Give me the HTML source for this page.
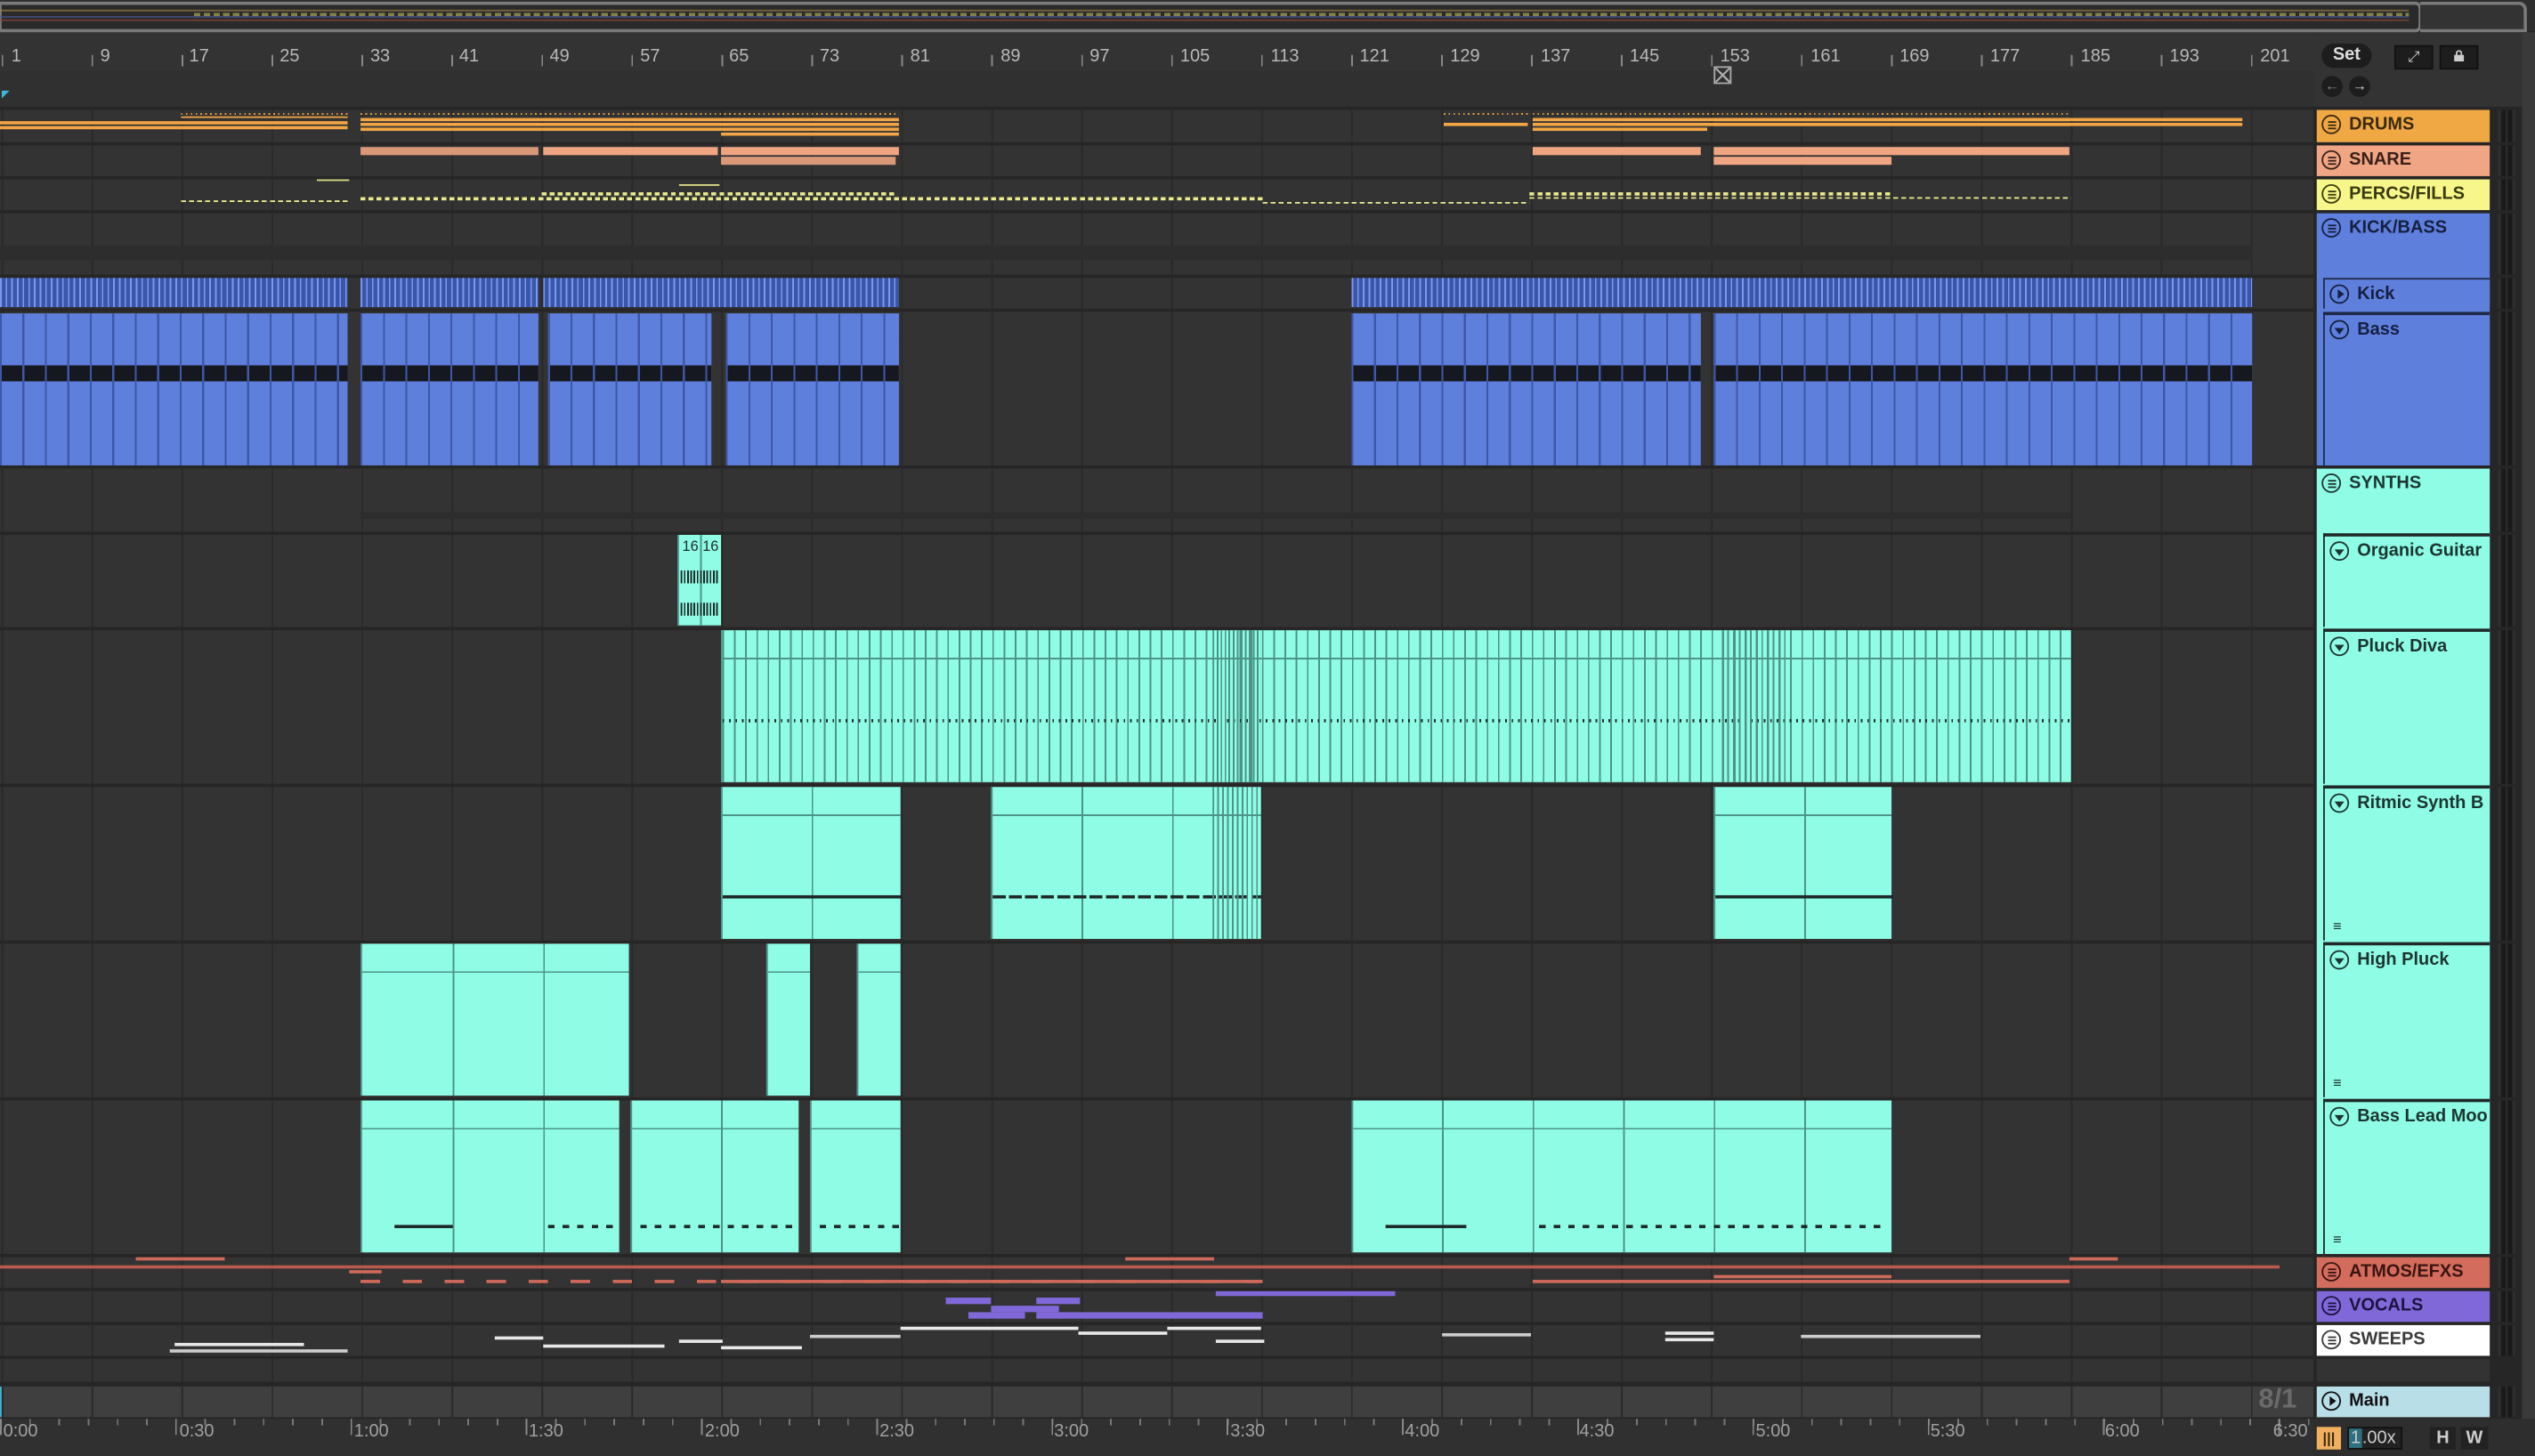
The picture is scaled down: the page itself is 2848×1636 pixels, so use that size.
<!DOCTYPE html>
<html><head><meta charset="utf-8">
<style>
html,body{margin:0;padding:0;background:#2b2b2b;width:2848px;height:1636px;overflow:hidden}
#w{position:absolute;left:0;top:0;width:1568px;height:901px;transform:scale(1.81633,1.81576);transform-origin:0 0;background:#262626;font-family:"Liberation Sans",sans-serif}
.a{position:absolute}
.row{position:absolute;left:0;width:1431px;background-color:#333;background-image:repeating-linear-gradient(90deg,#292929 0 1px,transparent 1px 55.65px);background-position:1px 0}
.h{position:absolute;left:1433px;width:107px;font-weight:bold;font-size:11px;color:#1e2a35;box-sizing:border-box;padding-left:20px;line-height:19px;white-space:nowrap;overflow:hidden}
.ic{position:absolute;left:3px;top:3px;width:12px;height:12px;border:1.2px solid currentColor;border-radius:50%;box-sizing:border-box}
.ic i{position:absolute;left:2.5px;width:5px;height:1px;background:currentColor}
.m{position:absolute;left:1545px;width:11px;background:#1a1a1a;border-left:2px solid #2e2e2e;border-right:2px solid #2e2e2e;box-sizing:border-box}
.m:after{content:"";position:absolute;left:3px;top:0;bottom:0;width:1px;background:#2e2e2e}
.cy{position:absolute;background-color:#8ffde6;border-left:1px solid #4d9488;box-sizing:border-box}
.bl{position:absolute;background:#5f7fdd;background-image:repeating-linear-gradient(90deg,#3d58a8 0 1.2px,transparent 1.2px 13.9px),linear-gradient(#5f7fdd 0 32px,#16181f 32px 42px,transparent 42px),linear-gradient(transparent 16px,#3d58a8 16px 18px,transparent 18px)}
.kk{position:absolute;background:#3a56a8;background-image:repeating-linear-gradient(90deg,#7b97ef 0 1px,transparent 1px 3.5px)}
.or{position:absolute;height:2px;background:#f1a545}
.sn{position:absolute;height:5px;background:#efa581}
.yl{position:absolute;height:1px;background:repeating-linear-gradient(90deg,#eaea90 0 3px,transparent 3px 5px)}
.rd{position:absolute;height:2px;background:#cf6a5a}
.vo{position:absolute;height:4px;background:#8068d8}
.wh{position:absolute;height:2px;background:#e8e8e8}
.num{position:absolute;top:29px;font-size:11px;color:#b8b8b8}
.tn{position:absolute;top:880px;font-size:11px;color:#a0a0a0}
.nt{position:absolute;height:1px;background:#1d2a28}
</style></head><body><div id="w">

<div class="a" style="left:0;top:0;width:1568px;height:19px;background:#2e2e2e"></div>
<div class="a" style="left:0;top:1px;width:1495px;height:15px;border:2px solid #7a7a7a;border-left:1px solid #7a7a7a;border-radius:0 4px 4px 0;background:#2a2a2a"></div>
<div class="a" style="left:0;top:6px;width:1490px;height:1px;background:#b0884a;opacity:.6"></div>
<div class="a" style="left:120px;top:8px;width:1370px;height:2px;background:repeating-linear-gradient(90deg,#a8a85a 0 4px,transparent 4px 6px);opacity:.7"></div>
<div class="a" style="left:0;top:10px;width:1490px;height:1px;background:#4a5a9a;opacity:.7"></div>
<div class="a" style="left:0;top:12px;width:1490px;height:1px;background:#8a4a40;opacity:.7"></div>
<div class="a" style="left:1497px;top:1px;width:64px;height:15px;border:2px solid #7a7a7a;border-left:none;border-radius:0 5px 0 0;background:#333"></div>

<div class="a" style="left:0;top:20px;width:1431px;height:46px;background:#333"></div>
<div class="a" style="left:0;top:44px;width:1431px;height:22px;background:#303030"></div>
<div class="a" style="left:1431px;top:20px;width:137px;height:46px;background:#333"></div>
<div class="num" style="left:7px">1</div><div class="num" style="left:62px">9</div><div class="num" style="left:117px">17</div><div class="num" style="left:173px">25</div><div class="num" style="left:229px">33</div><div class="num" style="left:284px">41</div><div class="num" style="left:340px">49</div><div class="num" style="left:396px">57</div><div class="num" style="left:451px">65</div><div class="num" style="left:507px">73</div><div class="num" style="left:563px">81</div><div class="num" style="left:619px">89</div><div class="num" style="left:674px">97</div><div class="num" style="left:730px">105</div><div class="num" style="left:786px">113</div><div class="num" style="left:841px">121</div><div class="num" style="left:897px">129</div><div class="num" style="left:953px">137</div><div class="num" style="left:1008px">145</div><div class="num" style="left:1064px">153</div><div class="num" style="left:1120px">161</div><div class="num" style="left:1175px">169</div><div class="num" style="left:1231px">177</div><div class="num" style="left:1287px">185</div><div class="num" style="left:1342px">193</div><div class="num" style="left:1398px">201</div>
<div class="a" style="left:1px;top:34px;width:1410px;height:7px;background:repeating-linear-gradient(90deg,#888 0 1px,transparent 1px 55.65px)"></div>
<div class="a" style="left:1px;top:56px;width:5px;height:5px;background:#3fb7d6;clip-path:polygon(0 0,100% 0,0 100%)"></div>
<div class="a" style="left:1060px;top:41px;width:11px;height:11px;border:1px solid #aaa;box-sizing:border-box;background:linear-gradient(45deg,transparent 45%,#aaa 45% 55%,transparent 55%),linear-gradient(-45deg,transparent 45%,#aaa 45% 55%,transparent 55%)"></div>
<div class="a" style="left:1436px;top:27px;width:31px;height:15px;border-radius:8px;background:#1d1d1d;color:#ddd;font-size:11px;font-weight:bold;text-align:center;line-height:15px">Set</div>
<div class="a" style="left:1481px;top:28px;width:22px;height:13px;background:#1d1d1d;border:1px solid #111;color:#ddd;font-size:9px;text-align:center;line-height:13px">⤢</div>
<div class="a" style="left:1509px;top:28px;width:22px;height:13px;background:#1d1d1d;border:1px solid #111"><div class="a" style="left:8px;top:5px;width:6px;height:4px;background:#ccc"></div><div class="a" style="left:9px;top:2px;width:4px;height:4px;border:1px solid #ccc;border-bottom:none;border-radius:3px 3px 0 0;box-sizing:border-box"></div></div>
<div class="a" style="left:1436px;top:47px;width:13px;height:13px;border-radius:50%;background:#1d1d1d;color:#888;font-size:9px;text-align:center;line-height:13px">←</div>
<div class="a" style="left:1453px;top:47px;width:13px;height:13px;border-radius:50%;background:#1d1d1d;color:#ddd;font-size:9px;text-align:center;line-height:13px">→</div>

<div class="row" style="top:68px;height:20px"></div>
<div class="row" style="top:90px;height:19px"></div>
<div class="row" style="top:111px;height:19px"></div>
<div class="row" style="top:132px;height:38px"></div>
<div class="row" style="top:172px;height:19px"></div>
<div class="row" style="top:193px;height:95px"></div>
<div class="row" style="top:290px;height:39px"></div>
<div class="row" style="top:331px;height:57px"></div>
<div class="row" style="top:390px;height:95px"></div>
<div class="row" style="top:487px;height:95px"></div>
<div class="row" style="top:584px;height:95px"></div>
<div class="row" style="top:681px;height:95px"></div>
<div class="row" style="top:778px;height:19px"></div>
<div class="row" style="top:799px;height:19px"></div>
<div class="row" style="top:820px;height:19px"></div>
<div class="row" style="top:841px;height:14px"></div>
<div class="row" style="top:858px;height:19px;background-color:#3f3f3f"></div>
<div class="a" style="left:0;top:858px;width:1px;height:19px;background:#3fb7d6"></div>

<div class="or" style="left:0;top:75px;width:215px"></div><div class="or" style="left:0;top:78px;width:215px"></div>
<div class="or" style="left:112px;top:70px;width:103px;height:1px;background:repeating-linear-gradient(90deg,#f1a545 0 1px,transparent 1px 3px)"></div>
<div class="or" style="left:112px;top:72px;width:103px;height:1px"></div>
<div class="or" style="left:223px;top:70px;width:333px;height:1px;background:repeating-linear-gradient(90deg,#f1a545 0 1px,transparent 1px 3px)"></div>
<div class="or" style="left:223px;top:73px;width:333px"></div><div class="or" style="left:223px;top:76px;width:333px"></div><div class="or" style="left:223px;top:79px;width:333px"></div>
<div class="or" style="left:446px;top:82px;width:110px"></div>
<div class="or" style="left:893px;top:70px;width:52px;height:1px;background:repeating-linear-gradient(90deg,#f1a545 0 1px,transparent 1px 3px)"></div>
<div class="or" style="left:893px;top:76px;width:52px"></div>
<div class="or" style="left:948px;top:70px;width:332px;height:1px;background:repeating-linear-gradient(90deg,#f1a545 0 1px,transparent 1px 3px)"></div>
<div class="or" style="left:948px;top:73px;width:332px"></div><div class="or" style="left:948px;top:76px;width:332px"></div><div class="or" style="left:948px;top:79px;width:108px"></div>
<div class="or" style="left:1060px;top:73px;width:327px"></div><div class="or" style="left:1060px;top:76px;width:327px"></div>
<div class="sn" style="left:223px;top:91px;width:110px;background:#d99878"></div><div class="sn" style="left:336px;top:91px;width:108px"></div>
<div class="sn" style="left:446px;top:91px;width:110px"></div><div class="sn" style="left:446px;top:97px;width:108px;background:#d99878"></div>
<div class="sn" style="left:948px;top:91px;width:104px"></div><div class="sn" style="left:1060px;top:91px;width:220px"></div>
<div class="sn" style="left:1060px;top:97px;width:110px"></div>
<div class="yl" style="left:112px;top:124px;width:104px"></div><div class="yl" style="left:223px;top:122px;width:558px;height:2px"></div>
<div class="yl" style="left:335px;top:119px;width:220px;height:2px"></div>
<div class="yl" style="left:781px;top:125px;width:165px"></div>
<div class="yl" style="left:946px;top:119px;width:225px;height:2px"></div><div class="yl" style="left:946px;top:122px;width:335px"></div>
<div class="a" style="left:196px;top:111px;width:20px;height:1px;background:#dddd88"></div>
<div class="a" style="left:420px;top:114px;width:25px;height:1px;background:#dddd88"></div>
<div class="a" style="left:0;top:152px;width:1393px;height:9px;background:#2d2d2d"></div>
<div class="kk" style="left:0;top:172px;width:215px;height:18px"></div><div class="kk" style="left:223px;top:172px;width:110px;height:18px"></div>
<div class="kk" style="left:336px;top:172px;width:220px;height:18px"></div>
<div class="kk" style="left:836px;top:172px;width:557px;height:18px"></div>
<div class="bl" style="left:0;top:194px;width:215px;height:94px"></div><div class="bl" style="left:223px;top:194px;width:110px;height:94px"></div>
<div class="bl" style="left:339px;top:194px;width:101px;height:94px"></div><div class="bl" style="left:449px;top:194px;width:107px;height:94px"></div>
<div class="bl" style="left:836px;top:194px;width:216px;height:94px"></div><div class="bl" style="left:1060px;top:194px;width:333px;height:94px"></div>
<div class="a" style="left:223px;top:317px;width:1058px;height:4px;background:#2d2d2d"></div>
<div class="cy" style="left:419px;top:331px;width:27px;height:56px;background-image:linear-gradient(90deg,transparent 13px,#4d9488 13px 14px,transparent 14px)"><span style="position:absolute;left:2px;top:2px;font-size:9px;color:#1d2a28">16 16</span><div class="a" style="left:1px;top:22px;width:24px;height:8px;background:repeating-linear-gradient(90deg,#1d2a28 0 1px,transparent 1px 2px)"></div><div class="a" style="left:1px;top:42px;width:24px;height:8px;background:repeating-linear-gradient(90deg,#1d2a28 0 1px,transparent 1px 2px)"></div></div>
<div class="cy" style="left:446px;top:390px;width:835px;height:94px;background-image:linear-gradient(transparent 17px,#4d9488 17px 18px,transparent 18px),repeating-linear-gradient(90deg,#4d9488 0 1px,transparent 1px 6.95px)"><div class="a" style="left:0;top:55px;width:835px;height:2px;background:repeating-linear-gradient(90deg,#1d2a28 0 1px,transparent 1px 4px)"></div></div>
<div class="a" style="left:750px;top:390px;width:30px;height:94px;background:repeating-linear-gradient(90deg,#4d9488 0 1px,transparent 1px 2.5px)"></div>
<div class="a" style="left:1065px;top:390px;width:40px;height:94px;background:repeating-linear-gradient(90deg,#4d9488 0 1px,transparent 1px 3.5px)"></div>
<div class="cy" style="left:446px;top:487px;width:111px;height:94px;background-image:linear-gradient(transparent 17px,#4d9488 17px 18px,transparent 18px),linear-gradient(90deg,transparent 55px,#4d9488 55px 56px,transparent 56px)"><div class="nt" style="left:0;top:67px;width:111px;height:2px"></div></div>
<div class="cy" style="left:613px;top:487px;width:167px;height:94px;background-image:linear-gradient(transparent 17px,#4d9488 17px 18px,transparent 18px),linear-gradient(90deg,transparent 55px,#4d9488 55px 56px,transparent 56px 111px,#4d9488 111px 112px,transparent 112px)"><div class="nt" style="left:0;top:67px;width:167px;height:2px;background:repeating-linear-gradient(90deg,#1d2a28 0 8px,transparent 8px 10px)"></div></div>
<div class="a" style="left:750px;top:487px;width:30px;height:94px;background:repeating-linear-gradient(90deg,#4d9488 0 1px,transparent 1px 3px)"></div>
<div class="cy" style="left:1060px;top:487px;width:110px;height:94px;background-image:linear-gradient(transparent 17px,#4d9488 17px 18px,transparent 18px),linear-gradient(90deg,transparent 55px,#4d9488 55px 56px,transparent 56px)"><div class="nt" style="left:0;top:67px;width:110px;height:2px"></div></div>
<div class="cy" style="left:223px;top:584px;width:166px;height:94px;background-image:linear-gradient(transparent 17px,#4d9488 17px 18px,transparent 18px),linear-gradient(90deg,transparent 56px,#4d9488 56px 57px,transparent 57px 112px,#4d9488 112px 113px,transparent 113px)"></div>
<div class="cy" style="left:474px;top:584px;width:27px;height:94px;background-image:linear-gradient(transparent 17px,#4d9488 17px 18px,transparent 18px)"></div>
<div class="cy" style="left:530px;top:584px;width:27px;height:94px;background-image:linear-gradient(transparent 17px,#4d9488 17px 18px,transparent 18px)"></div>
<div class="cy" style="left:223px;top:681px;width:160px;height:94px;background-image:linear-gradient(transparent 17px,#4d9488 17px 18px,transparent 18px),linear-gradient(90deg,transparent 56px,#4d9488 56px 57px,transparent 57px 112px,#4d9488 112px 113px,transparent 113px)"><div class="nt" style="left:20px;top:77px;width:36px;height:2px"></div><div class="nt" style="left:115px;top:77px;width:45px;height:2px;background:repeating-linear-gradient(90deg,#1d2a28 0 4px,transparent 4px 9px)"></div></div>
<div class="cy" style="left:390px;top:681px;width:104px;height:94px;background-image:linear-gradient(transparent 17px,#4d9488 17px 18px,transparent 18px),linear-gradient(90deg,transparent 55px,#4d9488 55px 56px,transparent 56px)"><div class="nt" style="left:5px;top:77px;width:99px;height:2px;background:repeating-linear-gradient(90deg,#1d2a28 0 4px,transparent 4px 9px)"></div></div>
<div class="cy" style="left:501px;top:681px;width:56px;height:94px;background-image:linear-gradient(transparent 17px,#4d9488 17px 18px,transparent 18px)"><div class="nt" style="left:5px;top:77px;width:50px;height:2px;background:repeating-linear-gradient(90deg,#1d2a28 0 4px,transparent 4px 9px)"></div></div>
<div class="cy" style="left:836px;top:681px;width:334px;height:94px;background-image:linear-gradient(transparent 17px,#4d9488 17px 18px,transparent 18px),repeating-linear-gradient(90deg,transparent 0 55px,#4d9488 55px 56px)"><div class="nt" style="left:20px;top:77px;width:50px;height:2px"></div><div class="nt" style="left:115px;top:77px;width:215px;height:2px;background:repeating-linear-gradient(90deg,#1d2a28 0 4px,transparent 4px 9px)"></div></div>
<div class="rd" style="left:0;top:783px;width:1410px;background:#b85a4d"></div>
<div class="rd" style="left:84px;top:778px;width:55px"></div>
<div class="rd" style="left:216px;top:786px;width:20px"></div>
<div class="rd" style="left:223px;top:792px;width:556px;background:repeating-linear-gradient(90deg,#cf6a5a 0 12px,transparent 12px 26px)"></div>
<div class="rd" style="left:446px;top:792px;width:335px"></div>
<div class="rd" style="left:696px;top:778px;width:55px"></div>
<div class="rd" style="left:948px;top:792px;width:332px"></div>
<div class="rd" style="left:1060px;top:789px;width:110px"></div>
<div class="rd" style="left:1280px;top:778px;width:30px"></div>
<div class="vo" style="left:585px;top:803px;width:28px"></div><div class="vo" style="left:641px;top:803px;width:27px"></div>
<div class="vo" style="left:613px;top:808px;width:42px"></div>
<div class="vo" style="left:599px;top:812px;width:35px"></div><div class="vo" style="left:641px;top:812px;width:140px"></div>
<div class="vo" style="left:752px;top:799px;width:111px;height:3px"></div>
<div class="wh" style="left:108px;top:831px;width:80px"></div><div class="wh" style="left:105px;top:835px;width:110px;background:#ccc"></div>
<div class="wh" style="left:306px;top:827px;width:30px"></div><div class="wh" style="left:336px;top:832px;width:75px"></div>
<div class="wh" style="left:420px;top:829px;width:27px"></div><div class="wh" style="left:446px;top:833px;width:50px"></div>
<div class="wh" style="left:501px;top:826px;width:56px;background:#ccc"></div><div class="wh" style="left:557px;top:821px;width:110px"></div>
<div class="wh" style="left:667px;top:824px;width:55px"></div><div class="wh" style="left:722px;top:821px;width:58px"></div>
<div class="wh" style="left:752px;top:829px;width:30px"></div>
<div class="wh" style="left:892px;top:825px;width:55px;background:#ccc"></div>
<div class="wh" style="left:1030px;top:824px;width:30px"></div><div class="wh" style="left:1030px;top:828px;width:30px"></div>
<div class="wh" style="left:1114px;top:826px;width:111px;background:#ccc"></div>

<div class="a" style="left:0;top:878px;width:1431px;height:23px;background:#303030"></div>
<div class="a" style="left:0;top:878px;width:1431px;height:4px;background:repeating-linear-gradient(90deg,#777 0 1px,transparent 1px 18.07px)"></div>
<div class="a" style="left:0;top:878px;width:1431px;height:10px;background:repeating-linear-gradient(90deg,#888 0 1px,transparent 1px 108.4px)"></div>
<div class="tn" style="left:2px">0:00</div><div class="tn" style="left:111px">0:30</div><div class="tn" style="left:219px">1:00</div><div class="tn" style="left:327px">1:30</div><div class="tn" style="left:436px">2:00</div><div class="tn" style="left:544px">2:30</div><div class="tn" style="left:652px">3:00</div><div class="tn" style="left:761px">3:30</div><div class="tn" style="left:869px">4:00</div><div class="tn" style="left:977px">4:30</div><div class="tn" style="left:1086px">5:00</div><div class="tn" style="left:1194px">5:30</div><div class="tn" style="left:1302px">6:00</div><div class="tn" style="left:1406px">6:30</div>
<div class="a" style="left:1397px;top:856px;font-size:17px;color:#6a6a6a;font-weight:bold">8/1</div>

<div class="a" style="left:1431px;top:66px;width:2px;height:812px;background:#262626"></div>
<div class="h" style="top:68px;height:20px;background:#f0a845;color:#3a2a10"><span class="ic"><i style="top:2.5px"></i><i style="top:4.5px"></i><i style="top:6.5px"></i></span>DRUMS</div>
<div class="h" style="top:90px;height:19px;background:#f0a684;color:#3a2018"><span class="ic"><i style="top:2.5px"></i><i style="top:4.5px"></i><i style="top:6.5px"></i></span>SNARE</div>
<div class="h" style="top:111px;height:19px;background:#f6f68a;color:#3a3a10"><span class="ic"><i style="top:2.5px"></i><i style="top:4.5px"></i><i style="top:6.5px"></i></span>PERCS/FILLS</div>
<div class="h" style="top:132px;height:156px;background:#5f7fdd;color:#152040"><span class="ic"><i style="top:2.5px"></i><i style="top:4.5px"></i><i style="top:6.5px"></i></span>KICK/BASS</div>
<div class="h" style="top:172px;left:1437px;width:103px;height:19px;background:#5f7fdd;border-left:1px solid #1f2a48;border-top:1px solid #1f2a48;color:#152040"><span class="ic" style="left:3px;top:3px"><i style="left:3.5px;top:2px;width:0;height:0;border-left:4px solid #152040;border-top:3px solid transparent;border-bottom:3px solid transparent;background:none"></i></span>Kick</div>
<div class="h" style="top:193px;left:1437px;width:103px;height:95px;background:#5f7fdd;border-left:1px solid #1f2a48;border-top:2px solid #1f2a48;color:#152040"><span class="ic"><i style="left:2px;top:3.5px;width:0;height:0;border-top:4px solid #152040;border-left:3px solid transparent;border-right:3px solid transparent;background:none"></i></span>Bass</div>
<div class="h" style="top:290px;height:486px;background:#8ffde6;color:#1d3530"><span class="ic"><i style="top:2.5px"></i><i style="top:4.5px"></i><i style="top:6.5px"></i></span>SYNTHS</div>
<div class="h" style="top:330px;left:1437px;width:103px;height:58px;background:#8ffde6;border-left:1px solid #1f2a28;border-top:2px solid #1f2a28;color:#1d3530"><span class="ic"><i style="left:2px;top:3.5px;width:0;height:0;border-top:4px solid #1d3530;border-left:3px solid transparent;border-right:3px solid transparent;background:none"></i></span>Organic Guitar</div>
<div class="h" style="top:389px;left:1437px;width:103px;height:96px;background:#8ffde6;border-left:1px solid #1f2a28;border-top:2px solid #1f2a28;color:#1d3530"><span class="ic"><i style="left:2px;top:3.5px;width:0;height:0;border-top:4px solid #1d3530;border-left:3px solid transparent;border-right:3px solid transparent;background:none"></i></span>Pluck Diva</div>
<div class="h" style="top:486px;left:1437px;width:103px;height:96px;background:#8ffde6;border-left:1px solid #1f2a28;border-top:2px solid #1f2a28;color:#1d3530"><span class="ic"><i style="left:2px;top:3.5px;width:0;height:0;border-top:4px solid #1d3530;border-left:3px solid transparent;border-right:3px solid transparent;background:none"></i></span>Ritmic Synth B<span class="a" style="left:5px;top:76px;font-size:9px">≡</span></div>
<div class="h" style="top:583px;left:1437px;width:103px;height:96px;background:#8ffde6;border-left:1px solid #1f2a28;border-top:2px solid #1f2a28;color:#1d3530"><span class="ic"><i style="left:2px;top:3.5px;width:0;height:0;border-top:4px solid #1d3530;border-left:3px solid transparent;border-right:3px solid transparent;background:none"></i></span>High Pluck<span class="a" style="left:5px;top:76px;font-size:9px">≡</span></div>
<div class="h" style="top:680px;left:1437px;width:103px;height:96px;background:#8ffde6;border-left:1px solid #1f2a28;border-top:2px solid #1f2a28;color:#1d3530"><span class="ic"><i style="left:2px;top:3.5px;width:0;height:0;border-top:4px solid #1d3530;border-left:3px solid transparent;border-right:3px solid transparent;background:none"></i></span>Bass Lead Moo<span class="a" style="left:5px;top:76px;font-size:9px">≡</span></div>
<div class="h" style="top:778px;height:19px;background:#d46c5e;color:#3a1510"><span class="ic"><i style="top:2.5px"></i><i style="top:4.5px"></i><i style="top:6.5px"></i></span>ATMOS/EFXS</div>
<div class="h" style="top:799px;height:19px;background:#8068d8;color:#1c1440"><span class="ic"><i style="top:2.5px"></i><i style="top:4.5px"></i><i style="top:6.5px"></i></span>VOCALS</div>
<div class="h" style="top:820px;height:19px;background:#ffffff;color:#3a3a3a"><span class="ic"><i style="top:2.5px"></i><i style="top:4.5px"></i><i style="top:6.5px"></i></span>SWEEPS</div>
<div class="a" style="left:1433px;top:841px;width:107px;height:14px;background:#333"></div>
<div class="h" style="top:858px;height:19px;background:#b8dee8;color:#111"><span class="ic"><i style="left:3.5px;top:2px;width:0;height:0;border-left:4px solid #111;border-top:3px solid transparent;border-bottom:3px solid transparent;background:none"></i></span>Main</div>

<div class="m" style="top:68px;height:20px"></div><div class="m" style="top:90px;height:19px"></div><div class="m" style="top:111px;height:19px"></div>
<div class="m" style="top:132px;height:38px"></div><div class="m" style="top:172px;height:19px"></div><div class="m" style="top:193px;height:95px"></div>
<div class="m" style="top:290px;height:39px"></div><div class="m" style="top:331px;height:57px"></div><div class="m" style="top:390px;height:95px"></div>
<div class="m" style="top:487px;height:95px"></div><div class="m" style="top:584px;height:95px"></div><div class="m" style="top:681px;height:95px"></div>
<div class="m" style="top:778px;height:19px"></div><div class="m" style="top:799px;height:19px"></div><div class="m" style="top:820px;height:19px"></div>
<div class="m" style="top:858px;height:19px"></div>
<div class="a" style="left:1560px;top:20px;width:8px;height:858px;background:#3a3a3a"></div>

<div class="a" style="left:1431px;top:878px;width:137px;height:23px;background:#2e2e2e"></div>
<div class="a" style="left:1433px;top:883px;width:15px;height:14px;background:#f0b060;color:#3a2a10;font-size:9px;text-align:center;line-height:14px;font-weight:bold">|||</div>
<div class="a" style="left:1452px;top:883px;width:34px;height:14px;background:#222;border:1px solid #111;box-sizing:border-box;font-size:11px;color:#ccc;line-height:12px"><span style="background:#2f7080;padding:0 1px">1</span>.00x</div>
<div class="a" style="left:1503px;top:883px;width:16px;height:14px;background:#222;color:#ccc;font-size:11px;text-align:center;line-height:14px;font-weight:bold">H</div>
<div class="a" style="left:1522px;top:883px;width:17px;height:14px;background:#222;color:#ccc;font-size:11px;text-align:center;line-height:14px;font-weight:bold">W</div>
</div></body></html>
